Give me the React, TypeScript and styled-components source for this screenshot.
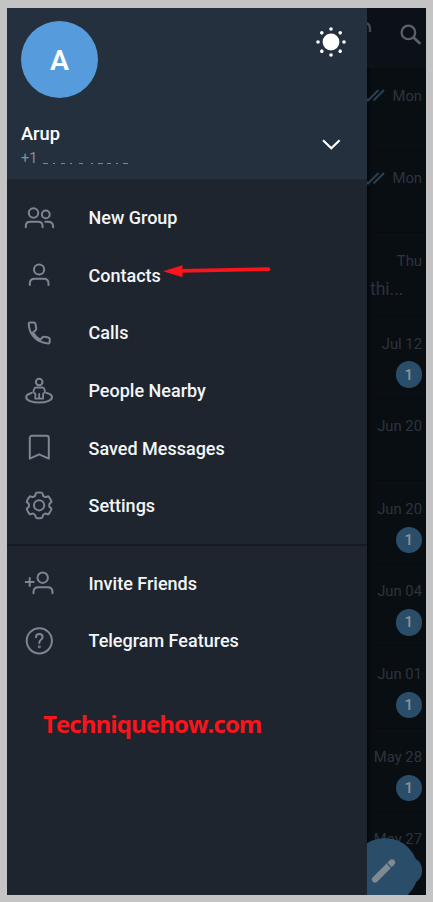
import React from "react";
import styled, { createGlobalStyle } from "styled-components";

const GlobalStyle = createGlobalStyle`
  * { box-sizing: border-box; }
  body { margin: 0; background: #c4c4c4; font-family: Roboto, "Liberation Sans", sans-serif; }
`;

const Page = styled.div`
  width: 433px;
  height: 902px;
  padding: 8px 7px 7px;
  background: #c4c4c4;
`;

const Screen = styled.main`
  display: flex;
  width: 419px;
  height: 887px;
  overflow: hidden;
  background: #090e13;
`;

const Drawer = styled.aside`
  flex: 0 0 360px;
  display: flex;
  flex-direction: column;
  background: #1e252f;
`;

const DrawerHeader = styled.header`
  display: flex;
  flex-direction: column;
  justify-content: space-between;
  height: 171px;
  padding: 13px 17px 10px 14px;
  background: #24303e;
`;

const HeaderLine = styled.div`
  display: flex;
  justify-content: space-between;
  align-items: flex-start;
`;

const Avatar = styled.div`
  display: flex;
  align-items: center;
  justify-content: center;
  width: 77px;
  height: 77px;
  padding-top: 1px;
  border-radius: 50%;
  background: #569cdd;
  color: #fff;
  font-size: 28.5px;
  font-weight: 600;
`;

const ThemeButton = styled.button`
  width: 34px;
  height: 34px;
  margin-top: 4px;
  margin-right: 2px;
  padding: 0;
  border: 0;
  background: none;
`;

const ExpandButton = styled(ThemeButton)`
  height: 20px;
  margin-top: 12px;
`;

const Name = styled.div`
  height: 27px;
  color: #fff;
  font-size: 18.3px;
  line-height: 24px;
  font-weight: 500;
`;

const AccountNumber = styled.div`
  display: flex;
  align-items: flex-end;
  gap: 4px;
  height: 20px;
  color: #86919b;
  font-size: 14.5px;
  line-height: 20px;
`;

const Menu = styled.nav`
  display: flex;
  flex-direction: column;
  padding: 10px 0 9px;
  & + & {
    border-top: 2px solid #161b23;
    padding-top: 8.7px;
  }
`;

const MenuItem = styled.a`
  display: flex;
  align-items: center;
  gap: 33.5px;
  height: 57.6px;
  padding-left: 16px;
  color: #f3f6f8;
  font-size: 18px;
  font-weight: 500;
  white-space: nowrap;
`;

const IconSvg = styled.svg`
  display: block;
  flex: none;
  width: 32px;
  height: 32px;
  fill: none;
  stroke: #7c8791;
  stroke-width: 2;
  stroke-linecap: round;
  stroke-linejoin: round;
`;

const Label = styled.span`
  position: relative;
`;

const Arrow = styled.svg`
  position: absolute;
  left: 74px;
  top: -3px;
  width: 112px;
  height: 18px;
`;

const Watermark = styled.div`
  margin: 30px 0 0 36px;
  color: #fa141b;
  font: 700 24px/32px "Open Sans", "Noto Sans", sans-serif;
  letter-spacing: -0.92px;
  white-space: nowrap;
`;

const Chats = styled.section`
  position: relative;
  flex: 1;
  display: flex;
  flex-direction: column;
  min-width: 0;
  overflow: hidden;
  background: #090e13;
  box-shadow: inset 3px 0 3px -1px #05080c;
`;

const TopBar = styled.div`
  flex: 0 0 60px;
  background: #0c1118;
`;

const TopIcons = styled.svg`
  display: block;
  width: 59px;
  height: 60px;
  fill: none;
`;

const ChatRow = styled.div`
  flex: 0 0 82.65px;
  display: flex;
  flex-direction: column;
  align-items: flex-end;
  padding: 17.6px 4px 0 0;
  border-bottom: 1px solid #070b0f;
`;

const ChatDate = styled.div`
  display: flex;
  align-items: center;
  gap: 7px;
  height: 20px;
  color: #2e343b;
  font-size: 14.8px;
  line-height: 20px;
  white-space: nowrap;
`;

const Checks = styled.svg`
  width: 19px;
  height: 13px;
  fill: none;
  stroke: #294052;
  stroke-width: 2;
`;

const Badge = styled.div`
  display: flex;
  align-items: center;
  justify-content: center;
  width: 26.5px;
  height: 26.5px;
  margin-top: 7.8px;
  border-radius: 50%;
  background: #2a4e69;
  color: #8a939b;
  font-size: 15px;
  font-weight: 500;
`;

const Preview = styled.div`
  align-self: flex-start;
  margin: 7px 0 0 3px;
  color: #29333d;
  font-size: 17.5px;
  line-height: 22px;
`;

const Compose = styled.button`
  position: absolute;
  left: -15px;
  top: 830px;
  width: 66px;
  height: 66px;
  padding: 0;
  border: 0;
  border-radius: 50%;
  background: #2a4e69;
  svg { display: block; width: 66px; height: 66px; }
`;

function gearPath(cx: number, cy: number) {
  const point = (radius: number, degrees: number) => {
    const angle = (degrees * Math.PI) / 180;
    return `${(cx + radius * Math.sin(angle)).toFixed(2)} ${(cy - radius * Math.cos(angle)).toFixed(2)}`;
  };
  let d = `M${point(12.9, -11)}`;
  for (let a = 0; a < 360; a += 60) {
    d += ` Q${point(13.1, a)} ${point(12.9, a + 11)}`;
    d += ` Q${point(13, a + 16)} ${point(11.5, a + 18)}`;
    d += ` Q${point(10, a + 21)} ${point(10.2, a + 30)}`;
    d += ` Q${point(10, a + 39)} ${point(11.5, a + 42)}`;
    d += ` Q${point(13, a + 44)} ${point(12.9, a + 49)}`;
  }
  return d + "Z";
}

const icons: Record<string, React.ReactNode> = {
  group: (
    <>
      <circle cx="10.5" cy="11" r="4.7" />
      <circle cx="22.8" cy="12.4" r="3.9" />
      <path d="M2.8 25.3v-1.2c0-2.8 1.6-4.4 4.6-4.4h7.5c3 0 4.7 1.6 4.7 4.4v1.2M22.3 19.7h2.6c3.2 0 5.2 1.8 5.2 4.6v1" />
    </>
  ),
  person: (
    <>
      <circle cx="16.1" cy="10.5" r="5.1" />
      <path d="M6.8 26v-1.5c0-3 1.7-4.7 4.8-4.7h9.1c3.1 0 4.8 1.7 4.8 4.7V26" />
    </>
  ),
  phone: (
    <path d="M7.2 5.5h3.6c.9 0 1.4.4 1.6 1.2l.8 4.6c.2.8 0 1.4-.6 1.9l-2.6 2.3c1.7 3.1 4 5.5 7.3 7.3l2.3-2.5c.6-.6 1.2-.8 2-.6l3.8.8c.9.2 1.3.7 1.3 1.6v2.8c0 1-.6 1.6-1.6 1.5C14.2 25.7 6.2 17.8 5.7 7.1 5.6 6.1 6.1 5.5 7.2 5.5Z" />
  ),
  nearby: (
    <>
      <circle cx="16.2" cy="7" r="3.3" />
      <path d="M13 12.5h6.4c1.3 0 1.8.8 2.1 2l.6 3-2 1v5.2h-7.8v-5.2l-2-1 .6-3c.3-1.2.8-2 2.1-2ZM16.2 19v4.4" strokeWidth="1.8" />
      <path d="M8.5 18c-3.2.8-5.3 2.4-5.3 4.3 0 3.1 5.8 5.2 12.8 5.2s13-2.1 13-5.2c0-1.9-2-3.5-5.2-4.3" />
    </>
  ),
  bookmark: <path d="M9 3.8h14.6c1.4 0 2.2.8 2.2 2.2v20.7l-9.6-4.4-9.4 4.4V6c0-1.4.8-2.2 2.2-2.2Z" />,
  gear: (
    <>
      <path d={gearPath(16.1, 15.3)} />
      <circle cx="16.1" cy="15.3" r="5.1" />
    </>
  ),
  invite: (
    <>
      <circle cx="19.7" cy="10.7" r="5.2" />
      <path d="M10.5 26.2v-1.3c0-3 1.8-4.7 4.9-4.7h9.2c3.1 0 4.9 1.7 4.9 4.7v1.3M6.7 11v8M2.7 15h8" />
    </>
  ),
  help: (
    <>
      <circle cx="16.3" cy="15.8" r="12.6" />
      <path d="M13 12.3c0-2 1.3-3.3 3.3-3.3s3.3 1.2 3.3 3c0 1.4-.8 2.1-1.9 3-1 .8-1.4 1.4-1.4 2.7v.3" />
      <circle cx="16.3" cy="21.8" r=".5" />
    </>
  ),
};

const mainItems = [
  ["group", "New Group"],
  ["person", "Contacts"],
  ["phone", "Calls"],
  ["nearby", "People Nearby"],
  ["bookmark", "Saved Messages"],
  ["gear", "Settings"],
];

const moreItems = [
  ["invite", "Invite Friends"],
  ["help", "Telegram Features"],
];

const chats: { date: string; read?: boolean; unread?: boolean; text?: string }[] = [
  { date: "Mon", read: true },
  { date: "Mon", read: true },
  { date: "Thu", text: "thi..." },
  { date: "Jul 12", unread: true },
  { date: "Jun 20" },
  { date: "Jun 20", unread: true },
  { date: "Jun 04", unread: true },
  { date: "Jun 01", unread: true },
  { date: "May 28", unread: true },
  { date: "May 27", unread: true },
];

const rays = [0, 45, 90, 135, 180, 225, 270, 315];

function MenuList({ items }: { items: string[][] }) {
  return (
    <Menu>
      {items.map(([icon, label]) => (
        <MenuItem key={label}>
          <IconSvg viewBox="0 0 32 32">{icons[icon]}</IconSvg>
          <Label>
            {label}
            {icon === "person" && (
              <Arrow viewBox="0 0 112 18">
                <path d="M18 8.8 105.5 7.2" stroke="#fa141b" strokeWidth="3.8" strokeLinecap="round" />
                <path d="M0 9.3 19.5 3.2v12Z" fill="#fa141b" />
              </Arrow>
            )}
          </Label>
        </MenuItem>
      ))}
    </Menu>
  );
}

export default function App() {
  return (
    <Page>
      <GlobalStyle />
      <Screen>
        <Drawer>
          <DrawerHeader>
            <HeaderLine>
              <Avatar>A</Avatar>
              <ThemeButton aria-label="Theme">
                <svg width="34" height="34" viewBox="-17 -17 34 34" fill="#fff">
                  <circle r="8.4" />
                  {rays.map((a) => (
                    <circle key={a} cy="-13" r="1.8" transform={`rotate(${a})`} />
                  ))}
                </svg>
              </ThemeButton>
            </HeaderLine>
            <HeaderLine>
              <div>
                <Name>Arup</Name>
                <AccountNumber>
                  +1
                  <svg width="90" height="20" viewBox="0 0 90 20" stroke="#7c8791" strokeWidth="1">
                    <path d="M2 14.5h5M12 14.5h2M20 14.5h4M29 14.5h2M38 14.5h4M50 14.5h2M57 14.5h5M66 14.5h4M75 14.5h2M82 14.5h5" />
                  </svg>
                </AccountNumber>
              </div>
              <ExpandButton aria-label="Accounts">
                <svg width="34" height="20" viewBox="0 0 34 20" fill="none" stroke="#fff" strokeWidth="2.2">
                  <path d="m9 6.2 8.3 8 8.3-8" />
                </svg>
              </ExpandButton>
            </HeaderLine>
          </DrawerHeader>
          <MenuList items={mainItems} />
          <MenuList items={moreItems} />
          <Watermark>Techniquehow.com</Watermark>
        </Drawer>
        <Chats>
          <TopBar>
            <TopIcons viewBox="0 0 59 60" stroke="#59616a" strokeWidth="2.3">
              <path d="M-3 17c2-3 6-1.5 6 4v3" stroke="#414a54" />
              <circle cx="41.4" cy="24.4" r="6.8" />
              <path d="m46.3 29.3 7 6.5" strokeWidth="2.8" />
            </TopIcons>
          </TopBar>
          {chats.map((chat, index) => (
            <ChatRow key={index}>
              <ChatDate>
                {chat.read && (
                  <Checks viewBox="0 0 19 13">
                    <path d="m-1 8 3 3.5L12.5 1M7.5 11.5 18 1" />
                  </Checks>
                )}
                {chat.date}
              </ChatDate>
              {chat.unread && <Badge>1</Badge>}
              {chat.text && <Preview>{chat.text}</Preview>}
            </ChatRow>
          ))}
          <Compose aria-label="New message">
            <svg viewBox="0 0 66 66" fill="none" stroke="#818991" strokeWidth="6.2">
              <path d="M23 41.500 37 27.500" strokeLinecap="round" />
              <path d="m38.800 25.700 1.200-1.200" strokeLinecap="round" />
              <path d="m34.800 25.200 6.500 6.500" stroke="#2a4e69" strokeWidth="1.200" />
            </svg>
          </Compose>
        </Chats>
      </Screen>
    </Page>
  );
}
